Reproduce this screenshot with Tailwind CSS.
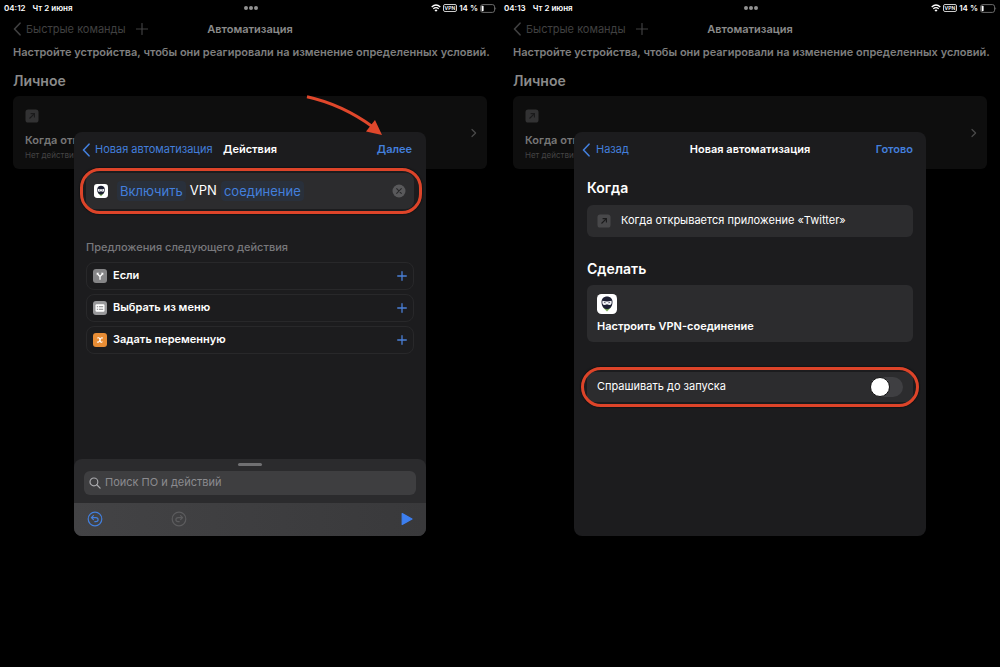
<!DOCTYPE html>
<html lang="ru">
<head>
<meta charset="utf-8">
<meta name="viewport" content="width=device-width, initial-scale=1">
<title>Автоматизация</title>
<script src="https://cdn.jsdelivr.net/npm/@tailwindcss/browser@4"></script>
</head>
<body class="bg-black">
<svg class="hidden" aria-hidden="true">
  <symbol id="chev-left" viewBox="0 0 8 14"><path d="M7 1.2 1.5 7 7 12.8" fill="none" stroke="currentColor" stroke-width="1.6" stroke-linecap="round" stroke-linejoin="round"/></symbol>
  <symbol id="chev-right" viewBox="0 0 6 10"><path d="M1 1.5 4.6 5 1 8.5" fill="none" stroke="currentColor" stroke-width="1.2" stroke-linecap="round" stroke-linejoin="round"/></symbol>
  <symbol id="plus-thin" viewBox="0 0 12 12"><path d="M6 .5v11M.5 6h11" fill="none" stroke="currentColor" stroke-width="1.2" stroke-linecap="round"/></symbol>
  <symbol id="plus" viewBox="0 0 10 10"><path d="M5 .7v8.600M.7 5h8.600" fill="none" stroke="currentColor" stroke-width="1.300" stroke-linecap="round"/></symbol>
  <symbol id="wifi" viewBox="0 0 10 8"><g fill="none" stroke="currentColor" stroke-width="1.300"><path d="M.7 3Q5-.9 9.300 3"/><path d="M2.300 4.800Q5 2.400 7.700 4.800"/></g><path d="M5 7.800 3.500 6.200Q5 5 6.500 6.200Z" fill="currentColor"/></symbol>
  <symbol id="battery" viewBox="0 0 17 9"><rect x=".6" y=".6" width="14" height="7.800" rx="2.200" fill="none" stroke="#777" stroke-width=".9"/><rect x="1.600" y="1.700" width="2" height="5.600" rx=".7" fill="#fff"/><path d="M15.500 3.200q1.400 1.300 0 2.600z" fill="#777"/></symbol>
  <symbol id="app-open" viewBox="0 0 14 14"><rect x=".5" y=".5" width="13" height="13" rx="2.600" fill="currentColor"/><path d="M4.500 9.500 9.200 4.800M5.600 4.600h3.800v3.800" fill="none" stroke="#1a1a1b" stroke-width="1.100"/></symbol>
  <symbol id="ninja" viewBox="0 0 20 20"><rect width="20" height="20" rx="4.500" fill="#fff"/><path d="M5.800 13.200 10 17.400l4.200-4.200z" fill="#7fb05e"/><path d="M4.500 8C4.500 4.700 6.800 2.600 10 2.600S15.500 4.700 15.500 8c0 3.700-2 7.200-5.500 7.200S4.500 11.700 4.500 8Z" fill="#1d2033"/><path d="M5.500 6.700Q10 8.300 14.500 6.700q.8 4.100-1.900 4.200-1.300 0-2.600-.7-1.300.7-2.600.7-2.700-.1-1.900-4.200Z" fill="#f4f5f8"/><path d="m6.700 8 2.300.8q-1.100 1.200-2.300-.8m6.600 0-2.300.8q1.100 1.200 2.300-.8" fill="#1d2033"/></symbol>
</svg>

<main class="grid min-h-screen grid-cols-2 overflow-hidden font-['Inter','Liberation_Sans',sans-serif] text-white">

  <section class="relative">
    <header class="grid h-4 grid-cols-[1fr_auto_1fr] items-center pr-[3px] pl-1 text-[8px] font-semibold">
      <div class="flex gap-[7px] leading-3"><time>04:12</time><span>Чт 2 июня</span></div>
      <div class="flex gap-px"><i class="size-1 rounded-full bg-[#919191]"></i><i class="size-1 rounded-full bg-[#919191]"></i><i class="size-1 rounded-full bg-[#919191]"></i></div>
      <div class="flex items-center justify-end gap-[2px] leading-3"><svg class="h-2 w-[10px]"><use href="#wifi"/></svg><span class="rounded-[2px] border border-white/80 px-px text-[5px] leading-[6px]">VPN</span><span>14 %</span><svg class="h-[9px] w-[17px]"><use href="#battery"/></svg></div>
    </header>
    <nav class="grid h-[26px] grid-cols-[1fr_auto_1fr] items-center px-[13px] text-[11px]">
      <div class="flex items-center text-[#404041]">
        <a href="#" class="flex items-center gap-[5px] whitespace-nowrap"><svg class="h-[14px] w-2"><use href="#chev-left"/></svg>Быстрые команды</a>
        <button type="button" aria-label="Добавить" class="ml-[10px]"><svg class="size-3"><use href="#plus-thin"/></svg></button>
      </div>
      <h1 class="font-semibold text-[#8a8a8a]">Автоматизация</h1>
    </nav>
    <p class="mt-[2px] px-[13px] text-[11px] leading-4 font-semibold whitespace-nowrap text-[#7e7e7e]">Настройте устройства, чтобы они реагировали на изменение определенных условий.</p>
    <h2 class="mt-[11px] px-[13px] text-[14px] leading-5 font-semibold text-[#8a8a8a]">Личное</h2>
    <article class="mx-[13px] mt-[5px] flex h-[73px] items-center justify-between rounded-md bg-[#0e0e0e] pr-[10px] pl-3">
      <div class="self-start pt-[13px]">
        <svg class="size-[14px] text-[#323233]"><use href="#app-open"/></svg>
        <h3 class="mt-[9px] text-[11px] leading-4 font-semibold text-[#777]">Когда открывается</h3>
        <p class="text-[8px] leading-[14px] text-[#444445]">Нет действий</p>
      </div>
      <svg class="h-[10px] w-[6px] text-[#4a4a4a]"><use href="#chev-right"/></svg>
    </article>

    <div class="absolute inset-0 flex items-center justify-center">
      <div role="dialog" aria-label="Действия" class="flex h-[404px] w-[352px] flex-col overflow-hidden rounded-lg bg-[#1c1c1e]">
        <div class="grid h-9 grid-cols-[1fr_auto_1fr] items-center px-2 text-[11px]">
          <a href="#" class="flex items-center gap-[5px] whitespace-nowrap text-[#437fdc]"><svg class="h-[14px] w-2"><use href="#chev-left"/></svg>Новая автоматизация</a>
          <h2 class="font-semibold">Действия</h2>
          <button type="button" class="justify-self-end pr-[6px] font-semibold text-[#437fdc]">Далее</button>
        </div>
        <div class="relative mx-3 mt-[5px] flex h-9 items-center rounded-lg bg-[#2c2c2e] px-2 text-[13px]">
          <svg class="size-[14px]" viewBox="0 0 20 20"><use href="#ninja"/></svg>
          <button type="button" class="ml-[9px] rounded bg-[#29303b] px-[3px] leading-5 text-[#437fdc]">Включить</button>
          <span class="mx-1">VPN</span>
          <button type="button" class="rounded bg-[#29303b] px-[3px] leading-5 text-[#437fdc]">соединение</button>
          <button type="button" aria-label="Удалить" class="ml-auto"><svg class="size-[14px]" viewBox="0 0 14 14"><circle cx="7" cy="7" r="6.500" fill="#59595b"/><path d="m4.700 4.700 4.600 4.600m0-4.600L4.700 9.300" stroke="#29292b" stroke-width="1.100" stroke-linecap="round"/></svg></button>
          <div class="pointer-events-none absolute -inset-y-[5px] -right-2 -left-[6px] rounded-[20px] border-[3px] border-[#dd4429] shadow-[0_0_2px_#000]"></div>
        </div>
        <h3 class="mx-3 mt-[30px] text-[11px] leading-[17px] font-medium text-[#78787c]">Предложения следующего действия</h3>
        <ul class="mx-3 mt-[6px] flex flex-col gap-1 text-[11px] font-semibold">
          <li class="flex h-7 items-center rounded-lg border border-[#28282a] px-[6px]">
            <svg class="size-[14px]" viewBox="0 0 14 14"><rect width="14" height="14" rx="3" fill="#858587"/><path d="M7 10.800V7.500L4.600 5M7 7.500 9.400 5" fill="none" stroke="#fff" stroke-width="1.300"/><path d="M3.600 3.800h2.600L3.800 6.200zM10.400 3.800H7.800l2.400 2.400z" fill="#fff"/></svg>
            <span class="ml-[6px]">Если</span><button type="button" aria-label="Добавить «Если»" class="ml-auto text-[#4a7fd6]"><svg class="size-[10px]"><use href="#plus"/></svg></button>
          </li>
          <li class="flex h-7 items-center rounded-lg border border-[#28282a] px-[6px]">
            <svg class="size-[14px]" viewBox="0 0 14 14"><rect width="14" height="14" rx="3" fill="#98989a"/><rect x="2.500" y="3.300" width="9" height="7.400" rx="1.200" fill="#fff"/><path d="M3.800 5.800h1.400m.8 0h4.200M3.800 8.200h1.400m.8 0h4.200" stroke="#858587" stroke-width="1.100"/></svg>
            <span class="ml-[6px]">Выбрать из меню</span><button type="button" aria-label="Добавить «Выбрать из меню»" class="ml-auto text-[#4a7fd6]"><svg class="size-[10px]"><use href="#plus"/></svg></button>
          </li>
          <li class="flex h-7 items-center rounded-lg border border-[#28282a] px-[6px]">
            <svg class="size-[14px]" viewBox="0 0 14 14"><rect width="14" height="14" rx="3" fill="#e88d35"/><path d="M4.600 4.900q1.500-.6 2 .8l.8 2.800q.5 1.300 1.700.3M9.500 4.900q-1-.5-1.800.7L6.200 8.400q-.8 1.200-1.800.6" fill="none" stroke="#fff" stroke-width="1.100" stroke-linecap="round"/></svg>
            <span class="ml-[6px]">Задать переменную</span><button type="button" aria-label="Добавить «Задать переменную»" class="ml-auto text-[#4a7fd6]"><svg class="size-[10px]"><use href="#plus"/></svg></button>
          </li>
        </ul>
        <footer class="mt-auto overflow-hidden rounded-t-lg bg-[#2b2b2d]">
          <div class="mx-auto mt-1 h-[3px] w-6 rounded-full bg-[#707072]"></div>
          <label class="mx-[10px] mt-[5px] mb-2 flex h-6 items-center gap-1 rounded-md bg-[#3e3e40] px-[5px]">
            <svg class="size-3 text-[#a9a9ac]" viewBox="0 0 12 12"><circle cx="4.900" cy="4.900" r="3.900" fill="none" stroke="currentColor" stroke-width="1.200"/><path d="m7.800 7.800 3.300 3.300" stroke="currentColor" stroke-width="1.300" stroke-linecap="round"/></svg>
            <input type="search" aria-label="Поиск" placeholder="Поиск ПО и действий" class="min-w-0 flex-1 bg-transparent text-[11px] outline-none placeholder:text-[#8b8b8f]">
          </label>
          <div class="flex h-[33px] items-center bg-linear-to-r from-[#434345] to-[#39393b] px-[13px]">
            <button type="button" aria-label="Отменить" class="text-[#437fdc]"><svg class="size-4" viewBox="0 0 16 16" fill="none" stroke="currentColor" stroke-width="1.200"><circle cx="8" cy="8" r="6.800"/><path d="M6.400 4.700 4.400 6.700l2 2M4.600 6.700h4.300q2.200.2 2.200 2t-2.200 2H7.800" stroke-linecap="round" stroke-linejoin="round"/></svg></button>
            <button type="button" aria-label="Повторить" class="ml-[68px] text-[#5c5c5e]"><svg class="size-4" viewBox="0 0 16 16" fill="none" stroke="currentColor" stroke-width="1.200"><circle cx="8" cy="8" r="6.800"/><path d="m9.600 4.700 2 2-2 2M11.400 6.700H7.100q-2.200.2-2.200 2t2.200 2h1.100" stroke-linecap="round" stroke-linejoin="round"/></svg></button>
            <button type="button" aria-label="Запустить" class="ml-auto text-[#3d7ff0]"><svg class="h-[14px] w-3" viewBox="0 0 12 14"><path d="M1.200 1.600v10.800L11 7z" fill="currentColor" stroke="currentColor" stroke-width="1.200" stroke-linejoin="round"/></svg></button>
          </div>
        </footer>
      </div>
    </div>
    <svg class="pointer-events-none absolute top-[90px] left-[300px] h-[50px] w-[90px]" viewBox="0 0 90 50" aria-hidden="true"><path d="M7 6.800Q42 14.500 73 37" fill="none" stroke="#e0472b" stroke-width="3"/><path d="M82 45 66 41.500 75 30z" fill="#e0472b"/></svg>
  </section>

  <section class="relative">
    <header class="grid h-4 grid-cols-[1fr_auto_1fr] items-center pr-[3px] pl-1 text-[8px] font-semibold">
      <div class="flex gap-[7px] leading-3"><time>04:13</time><span>Чт 2 июня</span></div>
      <div class="flex gap-px"><i class="size-1 rounded-full bg-[#919191]"></i><i class="size-1 rounded-full bg-[#919191]"></i><i class="size-1 rounded-full bg-[#919191]"></i></div>
      <div class="flex items-center justify-end gap-[2px] leading-3"><svg class="h-2 w-[10px]"><use href="#wifi"/></svg><span class="rounded-[2px] border border-white/80 px-px text-[5px] leading-[6px]">VPN</span><span>14 %</span><svg class="h-[9px] w-[17px]"><use href="#battery"/></svg></div>
    </header>
    <nav class="grid h-[26px] grid-cols-[1fr_auto_1fr] items-center px-[13px] text-[11px]">
      <div class="flex items-center text-[#404041]">
        <a href="#" class="flex items-center gap-[5px] whitespace-nowrap"><svg class="h-[14px] w-2"><use href="#chev-left"/></svg>Быстрые команды</a>
        <button type="button" aria-label="Добавить" class="ml-[10px]"><svg class="size-3"><use href="#plus-thin"/></svg></button>
      </div>
      <h1 class="font-semibold text-[#8a8a8a]">Автоматизация</h1>
    </nav>
    <p class="mt-[2px] px-[13px] text-[11px] leading-4 font-semibold whitespace-nowrap text-[#7e7e7e]">Настройте устройства, чтобы они реагировали на изменение определенных условий.</p>
    <h2 class="mt-[11px] px-[13px] text-[14px] leading-5 font-semibold text-[#8a8a8a]">Личное</h2>
    <article class="mx-[13px] mt-[5px] flex h-[73px] items-center justify-between rounded-md bg-[#0e0e0e] pr-[10px] pl-3">
      <div class="self-start pt-[13px]">
        <svg class="size-[14px] text-[#323233]"><use href="#app-open"/></svg>
        <h3 class="mt-[9px] text-[11px] leading-4 font-semibold text-[#777]">Когда открывается</h3>
        <p class="text-[8px] leading-[14px] text-[#444445]">Нет действий</p>
      </div>
      <svg class="h-[10px] w-[6px] text-[#4a4a4a]"><use href="#chev-right"/></svg>
    </article>

    <div class="absolute inset-0 flex items-center justify-center">
      <div role="dialog" aria-label="Новая автоматизация" class="flex h-[404px] w-[352px] flex-col overflow-hidden rounded-lg bg-[#1c1c1e]">
        <div class="grid h-9 grid-cols-[1fr_auto_1fr] items-center px-2 text-[11px]">
          <a href="#" class="flex items-center gap-[6px] text-[#437fdc]"><svg class="h-[14px] w-2"><use href="#chev-left"/></svg>Назад</a>
          <h2 class="font-semibold">Новая автоматизация</h2>
          <button type="button" class="justify-self-end pr-[5px] font-semibold text-[#437fdc]">Готово</button>
        </div>
        <div class="px-[13px]">
          <h3 class="mt-[10px] text-[14px] leading-5 font-semibold">Когда</h3>
          <div class="mt-[7px] flex h-8 items-center gap-[10px] rounded-md bg-[#2c2c2e] px-[10px] text-[11px]"><svg class="size-[14px] text-[#48484a]"><use href="#app-open"/></svg>Когда открывается приложение «Twitter»</div>
          <h3 class="mt-[22px] text-[14px] leading-5 font-semibold">Сделать</h3>
          <div class="mt-[6px] flex h-[57px] flex-col justify-center gap-1 rounded-md bg-[#2c2c2e] px-[10px] pt-px">
            <svg class="size-5" viewBox="0 0 20 20"><use href="#ninja"/></svg>
            <span class="text-[11px] leading-4 font-semibold">Настроить VPN-соединение</span>
          </div>
          <label class="relative mt-[30px] flex h-[30px] items-center justify-between rounded-md bg-[#2c2c2e] px-[10px] text-[11px]">Спрашивать до запуска
            <input type="checkbox" role="switch" class="h-5 w-[33px] appearance-none rounded-full bg-[#3f3f42] before:block before:size-5 before:rounded-full before:border before:border-[#111] before:bg-white checked:before:ml-[13px]">
            <span class="pointer-events-none absolute -inset-x-[6px] -inset-y-[5px] rounded-[20px] border-[3px] border-[#dd4429] shadow-[0_0_2px_#000]"></span>
          </label>
        </div>
      </div>
    </div>
  </section>
</main>
</body>
</html>
